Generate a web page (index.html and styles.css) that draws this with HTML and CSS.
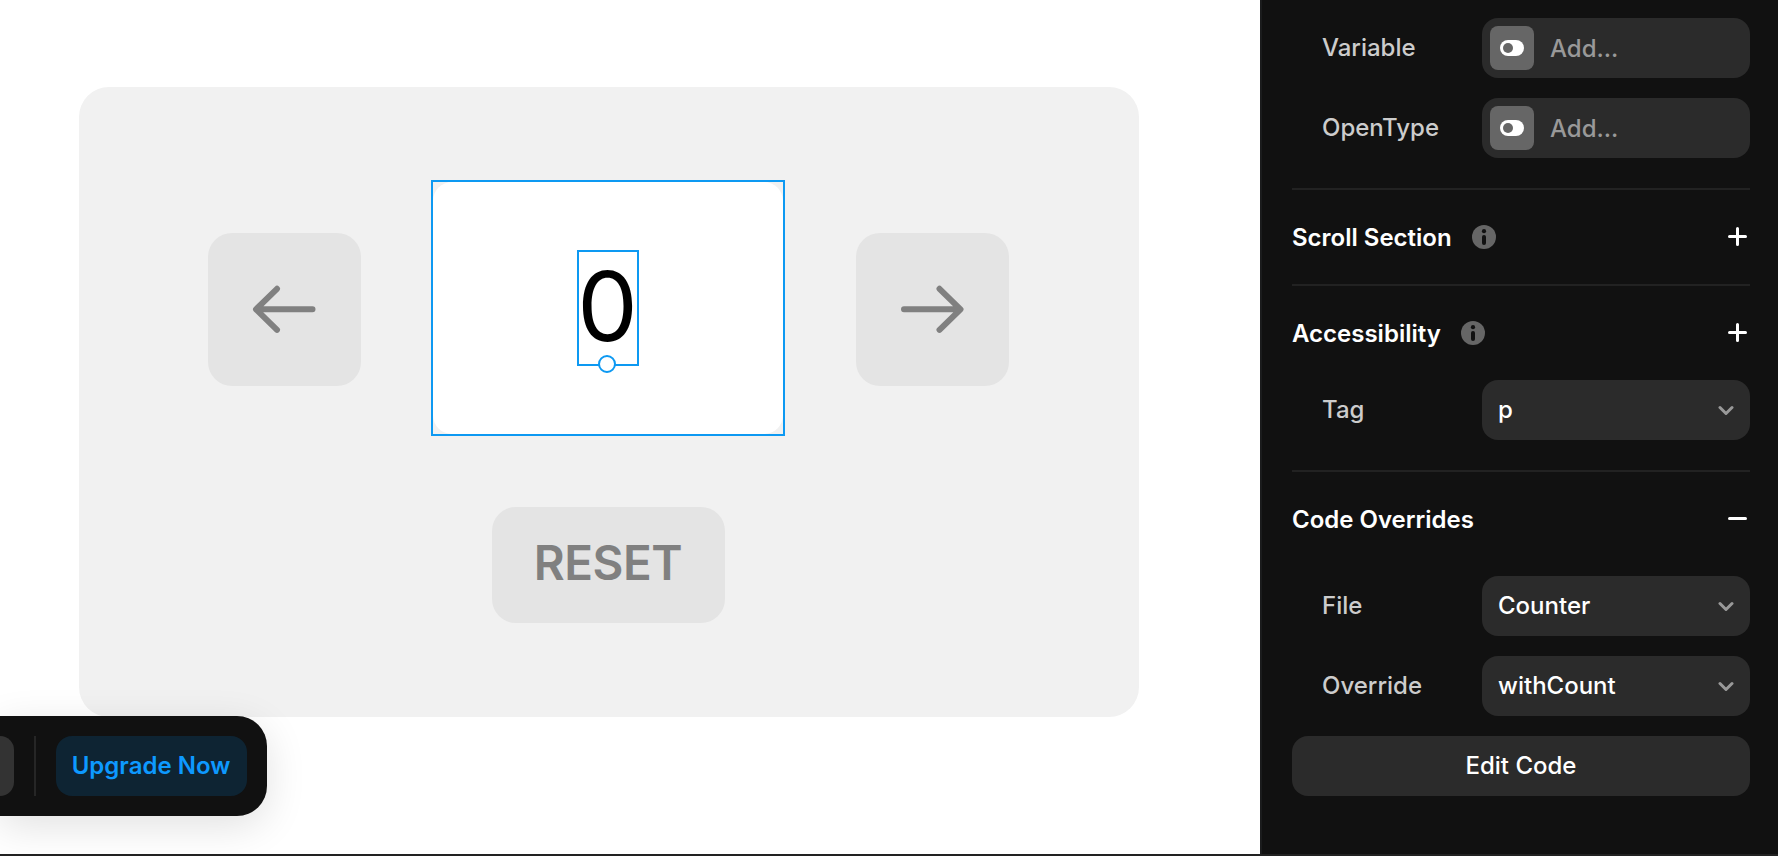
FILE: index.html
```html
<!DOCTYPE html>
<html lang="en">
<head>
<meta charset="utf-8">
<title>Counter</title>
<link rel="stylesheet" href="styles.css">
</head>
<body>
<div class="editor">
  <main class="canvas">
    <section class="card">
      <div class="controls">
        <div class="step">
          <svg width="64" height="50" viewBox="0 0 64 50"><path d="M25 3.8 4 24.3l21 20.5M4.5 24.3h56"/></svg>
        </div>
        <div class="display">
          <div class="surface"></div>
          <div class="count">0<span class="handle"></span></div>
        </div>
        <div class="step">
          <svg width="64" height="50" viewBox="0 0 64 50"><path d="M39.5 3.8l21 20.5-21 20.5M60 24.3H4"/></svg>
        </div>
      </div>
      <div class="reset">RESET</div>
    </section>
    <div class="toolbar">
      <div class="tool"></div>
      <div class="separator"></div>
      <div class="upgrade">Upgrade Now</div>
    </div>
  </main>
  <aside class="panel">
    <section class="group">
      <div class="row">
        <span class="label">Variable</span>
        <div class="field add"><span class="chip"><svg width="24" height="16" viewBox="0 0 24 16"><rect width="24" height="16" rx="8" fill="#fff"/><circle cx="8" cy="8" r="5" fill="#666"/></svg></span><span class="hint">Add...</span></div>
      </div>
      <div class="row">
        <span class="label">OpenType</span>
        <div class="field add"><span class="chip"><svg width="24" height="16" viewBox="0 0 24 16"><rect width="24" height="16" rx="8" fill="#fff"/><circle cx="8" cy="8" r="5" fill="#666"/></svg></span><span class="hint">Add...</span></div>
      </div>
    </section>
    <section class="group compact">
      <header class="head"><h2>Scroll Section</h2>
        <svg class="info" width="24" height="24" viewBox="0 0 24 24"><circle cx="12" cy="12" r="12" fill="#666"/><circle cx="12" cy="6.2" r="2.1" fill="#111"/><path d="M12 12v6" stroke="#111" stroke-width="4" stroke-linecap="round"/></svg>
        <svg class="sign" width="20" height="20" viewBox="0 0 20 20"><path d="M10.5 1.5v16M2.5 9.5h16"/></svg>
      </header>
    </section>
    <section class="group">
      <header class="head"><h2>Accessibility</h2>
        <svg class="info" width="24" height="24" viewBox="0 0 24 24"><circle cx="12" cy="12" r="12" fill="#666"/><circle cx="12" cy="6.2" r="2.1" fill="#111"/><path d="M12 12v6" stroke="#111" stroke-width="4" stroke-linecap="round"/></svg>
        <svg class="sign" width="20" height="20" viewBox="0 0 20 20"><path d="M10.5 1.5v16M2.5 9.5h16"/></svg>
      </header>
      <div class="row">
        <span class="label">Tag</span>
        <div class="field">p<svg class="chevron" width="16" height="11" viewBox="0 0 16 11"><path d="M2 2.5l6 6 6-6"/></svg></div>
      </div>
    </section>
    <section class="group overrides">
      <header class="head"><h2>Code Overrides</h2>
        <svg class="sign" width="20" height="20" viewBox="0 0 20 20"><path d="M2.5 9.5h16"/></svg>
      </header>
      <div class="row">
        <span class="label">File</span>
        <div class="field">Counter<svg class="chevron" width="16" height="11" viewBox="0 0 16 11"><path d="M2 2.5l6 6 6-6"/></svg></div>
      </div>
      <div class="row">
        <span class="label">Override</span>
        <div class="field">withCount<svg class="chevron" width="16" height="11" viewBox="0 0 16 11"><path d="M2 2.5l6 6 6-6"/></svg></div>
      </div>
      <div class="edit">Edit Code</div>
    </section>
  </aside>
</div>
</body>
</html>
```
FILE: styles.css
```css
* { box-sizing: border-box; }

body {
  margin: 0;
  font-family: Inter, "Liberation Sans", sans-serif;
  font-size: 24px;
  font-weight: 500;
  line-height: 30px;
  background: #fff;
}

svg { display: block; flex: none; }

.editor {
  display: grid;
  grid-template-columns: 1fr 518px;
  height: 856px;
  border-bottom: 2px solid #222;
  overflow: hidden;
}

.canvas {
  position: relative;
  overflow: hidden;
  padding: 87px 0 0 79px;
  background: #fff;
}

.card {
  display: flex;
  flex-direction: column;
  align-items: center;
  gap: 71px;
  width: 1060px;
  height: 630px;
  padding: 93px 2px 0 0;
  border-radius: 30px;
  background: #f1f1f1;
}

.controls {
  display: flex;
  align-items: center;
  gap: 70px;
  height: 256px;
}

.step {
  display: grid;
  place-items: center;
  width: 153px;
  height: 153px;
  margin-top: 3px;
  border-radius: 24px;
  background: #e4e4e4;
}

.step path {
  fill: none;
  stroke: #808080;
  stroke-width: 6;
  stroke-linecap: round;
  stroke-linejoin: round;
}

.display {
  display: grid;
  place-items: center;
  width: 354px;
  height: 256px;
  margin-right: 1px;
  border: 2px solid #0d99f2;
}

.surface {
  grid-area: 1 / 1;
  width: 100%;
  height: 100%;
  border-radius: 19px;
  background: #fff;
}

.count {
  grid-area: 1 / 1;
  position: relative;
  width: 62px;
  height: 116px;
  border: 2px solid #0d99f2;
  color: #000;
  font-size: 96px;
  font-weight: 400;
  line-height: 109px;
  display: flex;
  justify-content: center;
}

.handle {
  position: absolute;
  left: 19px;
  bottom: -9px;
  width: 18px;
  height: 18px;
  border: 2px solid #0d99f2;
  border-radius: 50%;
  background: #fff;
}

.reset {
  display: grid;
  place-items: center;
  width: 233px;
  height: 116px;
  padding-bottom: 4px;
  border-radius: 24px;
  background: #e4e4e4;
  color: #808080;
  font-size: 47.5px;
  font-weight: 600;
  letter-spacing: -0.5px;
  line-height: 58px;
}

.toolbar {
  position: absolute;
  left: 0;
  top: 716px;
  display: flex;
  align-items: center;
  width: 267px;
  height: 100px;
  border-radius: 0 30px 30px 0;
  background: #111;
  box-shadow: 0 10px 40px rgba(0, 0, 0, 0.12);
}

.tool {
  width: 14px;
  height: 60px;
  border-radius: 0 16px 16px 0;
  background: #333;
}

.separator {
  width: 2px;
  height: 60px;
  margin: 0 20px;
  background: #262626;
}

.upgrade {
  display: grid;
  place-items: center;
  width: 191px;
  height: 60px;
  padding-right: 1px;
  border-radius: 16px;
  background: #0e2433;
  color: #0d99ff;
  font-weight: 600;
}

.panel {
  padding: 18px 28px 0 30px;
  border-left: 2px solid #1b1c1d;
  background: #111;
  color: #fff;
}

.group {
  display: flex;
  flex-direction: column;
  gap: 20px;
  padding-bottom: 30px;
}

.group + .group { border-top: 2px solid #222; }

.compact { padding-bottom: 0; }

.head {
  display: flex;
  align-items: center;
  height: 94px;
  margin-bottom: -20px;
  padding-right: 3px;
}

.compact .head { margin-bottom: 0; }

.overrides .head { margin-bottom: -10px; }

h2 {
  margin: 0;
  padding-top: 2px;
  font-size: 24px;
  font-weight: 600;
  line-height: 30px;
}

.info { margin-left: 20px; }

.sign { margin-left: auto; }

.sign path {
  fill: none;
  stroke: #fff;
  stroke-width: 3;
  stroke-linecap: round;
}

.row {
  display: grid;
  grid-template-columns: 1fr 268px;
  align-items: center;
  padding-left: 30px;
}

.label { color: #ccc; }

.field {
  display: flex;
  align-items: center;
  justify-content: space-between;
  height: 60px;
  padding: 0 16px;
  border-radius: 16px;
  background: #2b2b2b;
}

.add {
  justify-content: flex-start;
  gap: 16px;
  padding: 0 8px;
  color: #999;
}

.hint { padding-top: 2px; }

.chip {
  display: grid;
  place-items: center;
  width: 44px;
  height: 44px;
  border-radius: 8px;
  background: #666;
}

.chevron path {
  fill: none;
  stroke: #999;
  stroke-width: 3;
  stroke-linecap: round;
  stroke-linejoin: round;
}

.edit {
  display: grid;
  place-items: center;
  height: 60px;
  border-radius: 16px;
  background: #2b2b2b;
}
```
